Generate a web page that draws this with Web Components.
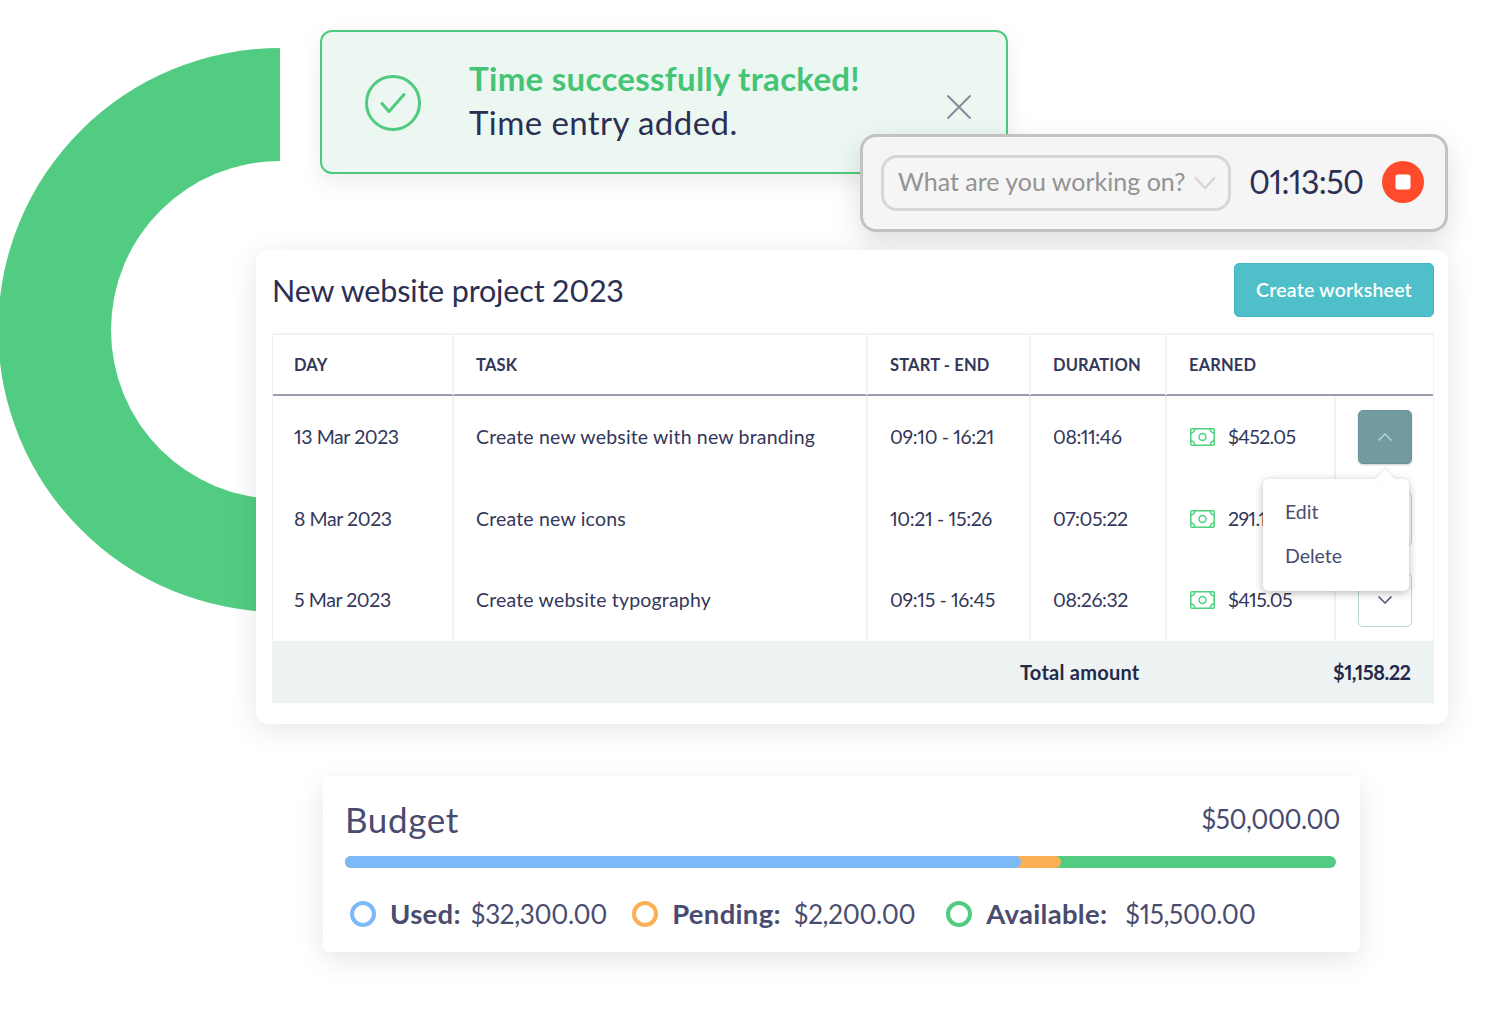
<!doctype html>
<html lang="en"><head><meta charset="utf-8"><title>Time tracking</title>
<style>
html,body{margin:0;background:#fff}
body{font-family:"Lato","Noto Sans",sans-serif;color:#2b2f54}
</style></head><body>
<ts-stage>
  <ts-ring></ts-ring>
  <ts-toast title-text="Time successfully tracked!" message="Time entry added."></ts-toast>
  <ts-timer></ts-timer>
  <ts-worksheet>
    <ts-row day="13 Mar 2023" task="Create new website with new branding" range="09:10 - 16:21" dur="08:11:46" earned="$452.05" open></ts-row>
    <ts-row day="8 Mar 2023" task="Create new icons" range="10:21 - 15:26" dur="07:05:22" earned="291.12"></ts-row>
    <ts-row day="5 Mar 2023" task="Create website typography" range="09:15 - 16:45" dur="08:26:32" earned="$415.05"></ts-row>
  </ts-worksheet>
  <ts-budget></ts-budget>
</ts-stage>
<script>
function def(name, css, html){
  customElements.define(name, class extends HTMLElement{
    connectedCallback(){
      if(this.shadowRoot) return;
      const r=this.attachShadow({mode:'open'});
      r.innerHTML='<style>'+css+'\n:host,:host *{font-variant-numeric:proportional-nums}</style>'+(typeof html==='function'?html(this):html);
    }
  });
}
def('ts-stage',':host{display:block;position:relative;width:1498px;height:1030px;overflow:hidden}','<slot></slot>');
def('ts-ring',':host{position:absolute;left:0;top:48px;width:281px;height:564px;display:block}svg{display:block}',
 '<svg width="281" height="564" viewBox="0 0 281 564"><path d="M280 0A282 282 0 0 0 280 564V451A169 169 0 0 1 280 113Z" fill="#52cc82"/></svg>');
def('ts-toast',`:host{position:absolute;left:320px;top:30px;width:688px;height:144px;box-sizing:border-box;display:flex;align-items:center;
  background:#edf7f2;border:2px solid #4cc97c;border-radius:12px;box-shadow:0 8px 24px rgba(0,0,0,.08);padding:2px 0 0 43px}
 .tx{margin-left:48px;display:flex;flex-direction:column;gap:5px;margin-top:-6px}
 b{font:700 33px/39px Lato,sans-serif;color:#45c476;letter-spacing:.3px}
 span{font:400 33px/39px Lato,sans-serif;color:#2b2f54;letter-spacing:.42px}
 svg{flex:none;display:block}.x{position:absolute;left:624px;top:62px}`,
 h=>`<svg width="56" height="56" viewBox="0 0 56 56" fill="none"><circle cx="28" cy="28" r="26.5" stroke="#4fca7e" stroke-width="3"/><path d="M17 28.500l7 8 15-17" stroke="#4fca7e" stroke-width="3" stroke-linecap="round" stroke-linejoin="round"/></svg>
 <div class="tx"><b>${h.getAttribute('title-text')}</b><span>${h.getAttribute('message')}</span></div>
 <svg class="x" width="26" height="26" viewBox="0 0 26 26" fill="none"><path d="M1.500 1.500L24.500 24.500M24.500 1.500L1.500 24.500" stroke="#878b9c" stroke-width="2"/></svg>`);
def('ts-timer',`:host{position:absolute;left:860px;top:134px;width:588px;height:98px;box-sizing:border-box;display:flex;align-items:center;
  background:#f5f5f5;border:3px solid #c2c2c2;border-radius:16px;box-shadow:0 10px 28px rgba(0,0,0,.13);padding:0 21px 0 18px}
 .in{width:350px;height:56px;box-sizing:border-box;border:3px solid #d6d6d6;border-radius:16px;display:flex;align-items:center;justify-content:space-between;padding:0 12px 4px 14px;
  font:400 25px Lato,sans-serif;color:#939393;letter-spacing:0;white-space:nowrap}
 .in svg{margin-top:4px}
 .t{font:400 32px Lato,sans-serif;color:#2b2f54;margin:0 0 3px 18px;flex:1;letter-spacing:-.6px}
 svg{display:block;flex:none}.stop{margin-top:-3px}`,
 `<div class="in"><span>What are you working on?</span><svg width="22" height="14" viewBox="0 0 22 14" fill="none"><path d="M1 1.500L11 12 21 1.500" stroke="#d2d2d2" stroke-width="2"/></svg></div>
 <div class="t">01:13:50</div>
 <svg class="stop" width="42" height="42" viewBox="0 0 42 42"><circle cx="21" cy="21" r="21" fill="#ff4b2b"/><rect x="13.500" y="13.500" width="15" height="15" rx="2.500" fill="#fff"/></svg>`);
def('ts-worksheet',`:host{position:absolute;left:256px;top:250px;width:1192px;height:474px;box-sizing:border-box;display:block;background:#fff;border-radius:12px;
  box-shadow:0 6px 30px rgba(0,0,0,.10);padding:13px 14px 21px 16px}
 .top{display:flex;justify-content:space-between;align-items:center;height:54px;margin-bottom:16px}
 h2{margin:0;font:400 30.500px Lato,sans-serif;color:#2b2f54;letter-spacing:-.15px}
 button{all:unset;width:200px;height:54px;box-sizing:border-box;text-align:center;background:#4fbfca;border:1px solid #3fb7c3;border-radius:5px;color:#fff;font:600 19.500px/52px Lato,sans-serif;letter-spacing:.2px}
 .tb{border:2px solid #edf3f3;border-bottom:0;border-right-width:1px;border-left-width:1px;position:relative}
 .head{display:grid;grid-template-columns:181px 414px 163px 136px 1fr;height:61px;box-sizing:border-box;border-bottom:2px solid #9a9daf;
  font:700 16.500px/60px Lato,sans-serif;color:#33375a;letter-spacing:.15px}
 .head div{padding-left:22px;border-right:2px solid #edf3f3}.head div:first-child{padding-left:21px}.head div:last-child{border:0}
 .total{display:flex;height:62px;background:#edf2f3;margin:0 -1px;align-items:center;font:700 20px/60px Lato,sans-serif;color:#24284a;letter-spacing:.25px}
 .total .l{margin-left:748px;width:313px}.total .a{letter-spacing:-.55px}
 .menu{position:absolute;left:990px;top:144px;width:146px;height:112px;box-sizing:border-box;background:#fff;border-radius:6px;box-shadow:0 2px 8px rgba(0,0,0,.28);
  display:flex;flex-direction:column;padding-top:11px;font:400 19.500px/44px Lato,sans-serif;color:#494c6e;letter-spacing:0;z-index:2}
 .menu span{padding-left:22px;position:relative}
 .menu::before{content:"";position:absolute;left:115px;top:-7px;width:14px;height:14px;background:#fff;transform:rotate(45deg);box-shadow:-1px -1px 3px rgba(0,0,0,.1)}`,
 `<div class="top"><h2>New website project 2023</h2><button>Create worksheet</button></div>
 <div class="tb"><div class="head"><div>DAY</div><div>TASK</div><div>START - END</div><div>DURATION</div><div>EARNED</div></div>
 <slot></slot>
 <div class="total"><div class="l">Total amount</div><div class="a">$1,158.22</div></div>
 <div class="menu"><span>Edit</span><span>Delete</span></div></div>`);
def('ts-row',`:host{display:grid;grid-template-columns:181px 414px 163px 136px 169px 1fr;height:81.670px;font:400 19.500px/82px Lato,sans-serif;color:#33375a;letter-spacing:.18px}
 .c{border-right:2px solid #edf3f3;padding-left:22px;white-space:nowrap}.c.day{padding-left:21px;letter-spacing:-.42px}
 .c.r{letter-spacing:-.36px}.c.du{letter-spacing:-.45px}
 .e{display:flex;align-items:center;gap:13px;padding-left:23px;letter-spacing:-.67px}
 .b{display:flex;align-items:center;justify-content:center}
 .btn{width:54px;height:54px;box-sizing:border-box;border:1px solid #bcd6d9;border-radius:5px;display:flex;align-items:center;justify-content:center;background:#fff}
 :host([open]) .btn{background:#729ba1;border-color:#6a949a;box-shadow:0 1px 2px rgba(0,0,0,.2)}
 svg{display:block}`,
 h=>{const o=h.hasAttribute('open');return `<div class="c day">${h.getAttribute('day')}</div><div class="c">${h.getAttribute('task')}</div><div class="c r">${h.getAttribute('range')}</div><div class="c du">${h.getAttribute('dur')}</div>
 <div class="c e"><svg width="25" height="18" viewBox="0 0 25 18" fill="none" stroke="#4fd07f" stroke-width="1.500"><rect x=".8" y=".8" width="23.400" height="16.400" rx="1"/><circle cx="12.500" cy="9" r="3.500"/><path d="M.8 5a4 4 0 0 0 4-4.200M24.200 5a4 4 0 0 1-4-4.200M.8 13a4 4 0 0 1 4 4.200M24.200 13a4 4 0 0 0-4 4.200"/></svg><span>${h.getAttribute('earned')}</span></div>
 <div class="b"><div class="btn"><svg width="16" height="10" viewBox="0 0 16 10" fill="none" stroke="${o?'#b9d1d4':'#4d5170'}" stroke-width="1.500"><path d="${o?'M1.500 8.500L8 2l6.500 6.500':'M1.500 1.500L8 8l6.500-6.500'}"/></svg></div></div>`});
def('ts-budget',`:host{position:absolute;left:323px;top:776px;width:1037px;height:176px;box-sizing:border-box;display:block;background:#fff;border-radius:6px;box-shadow:0 8px 28px rgba(0,0,0,.10);padding:20px 20px 0 22px;color:#494c6e}
 .h{display:flex;justify-content:space-between;align-items:center;height:46px}
 .t{font:400 35px Lato,sans-serif;letter-spacing:.6px}.v{font:400 26px/48px Lato,sans-serif;letter-spacing:-.4px}
 .bar{display:flex;height:12px;width:991px;margin-top:14px;border-radius:6px;background:#52cc82;position:relative}
 .bar i{display:block;position:absolute;left:0;top:0;height:12px;border-radius:6px}
 .u{width:676px;background:#7cb9f9;z-index:1}.p{width:716px;background:#fbb053}
 .l{display:flex;align-items:center;margin-top:29px;font:400 27.500px/34px Lato,sans-serif;white-space:nowrap;letter-spacing:.3px}
 .d{width:26px;height:26px;box-sizing:border-box;border:4px solid;border-radius:50%;margin-left:5px;margin-right:14px;flex:none}
 b{font-weight:700;margin-right:13px}
 .g{display:flex;align-items:center}
 .m{font-size:26px;letter-spacing:-.3px}`,
 `<div class="h"><div class="t">Budget</div><div class="v">$50,000.00</div></div>
 <div class="bar"><i class="p"></i><i class="u"></i></div>
 <div class="l"><div class="g"><span class="d" style="border-color:#7cb9f9"></span><b style="margin-right:10px">Used:</b><span class="m">$32,300.00</span></div>
 <div class="g" style="margin-left:20px"><span class="d" style="border-color:#fbb053"></span><b>Pending:</b><span class="m">$2,200.00</span></div>
 <div class="g" style="margin-left:26px"><span class="d" style="border-color:#52cc82"></span><b style="margin-right:18px">Available:</b><span class="m">$15,500.00</span></div></div>`);
</script>
</body></html>
